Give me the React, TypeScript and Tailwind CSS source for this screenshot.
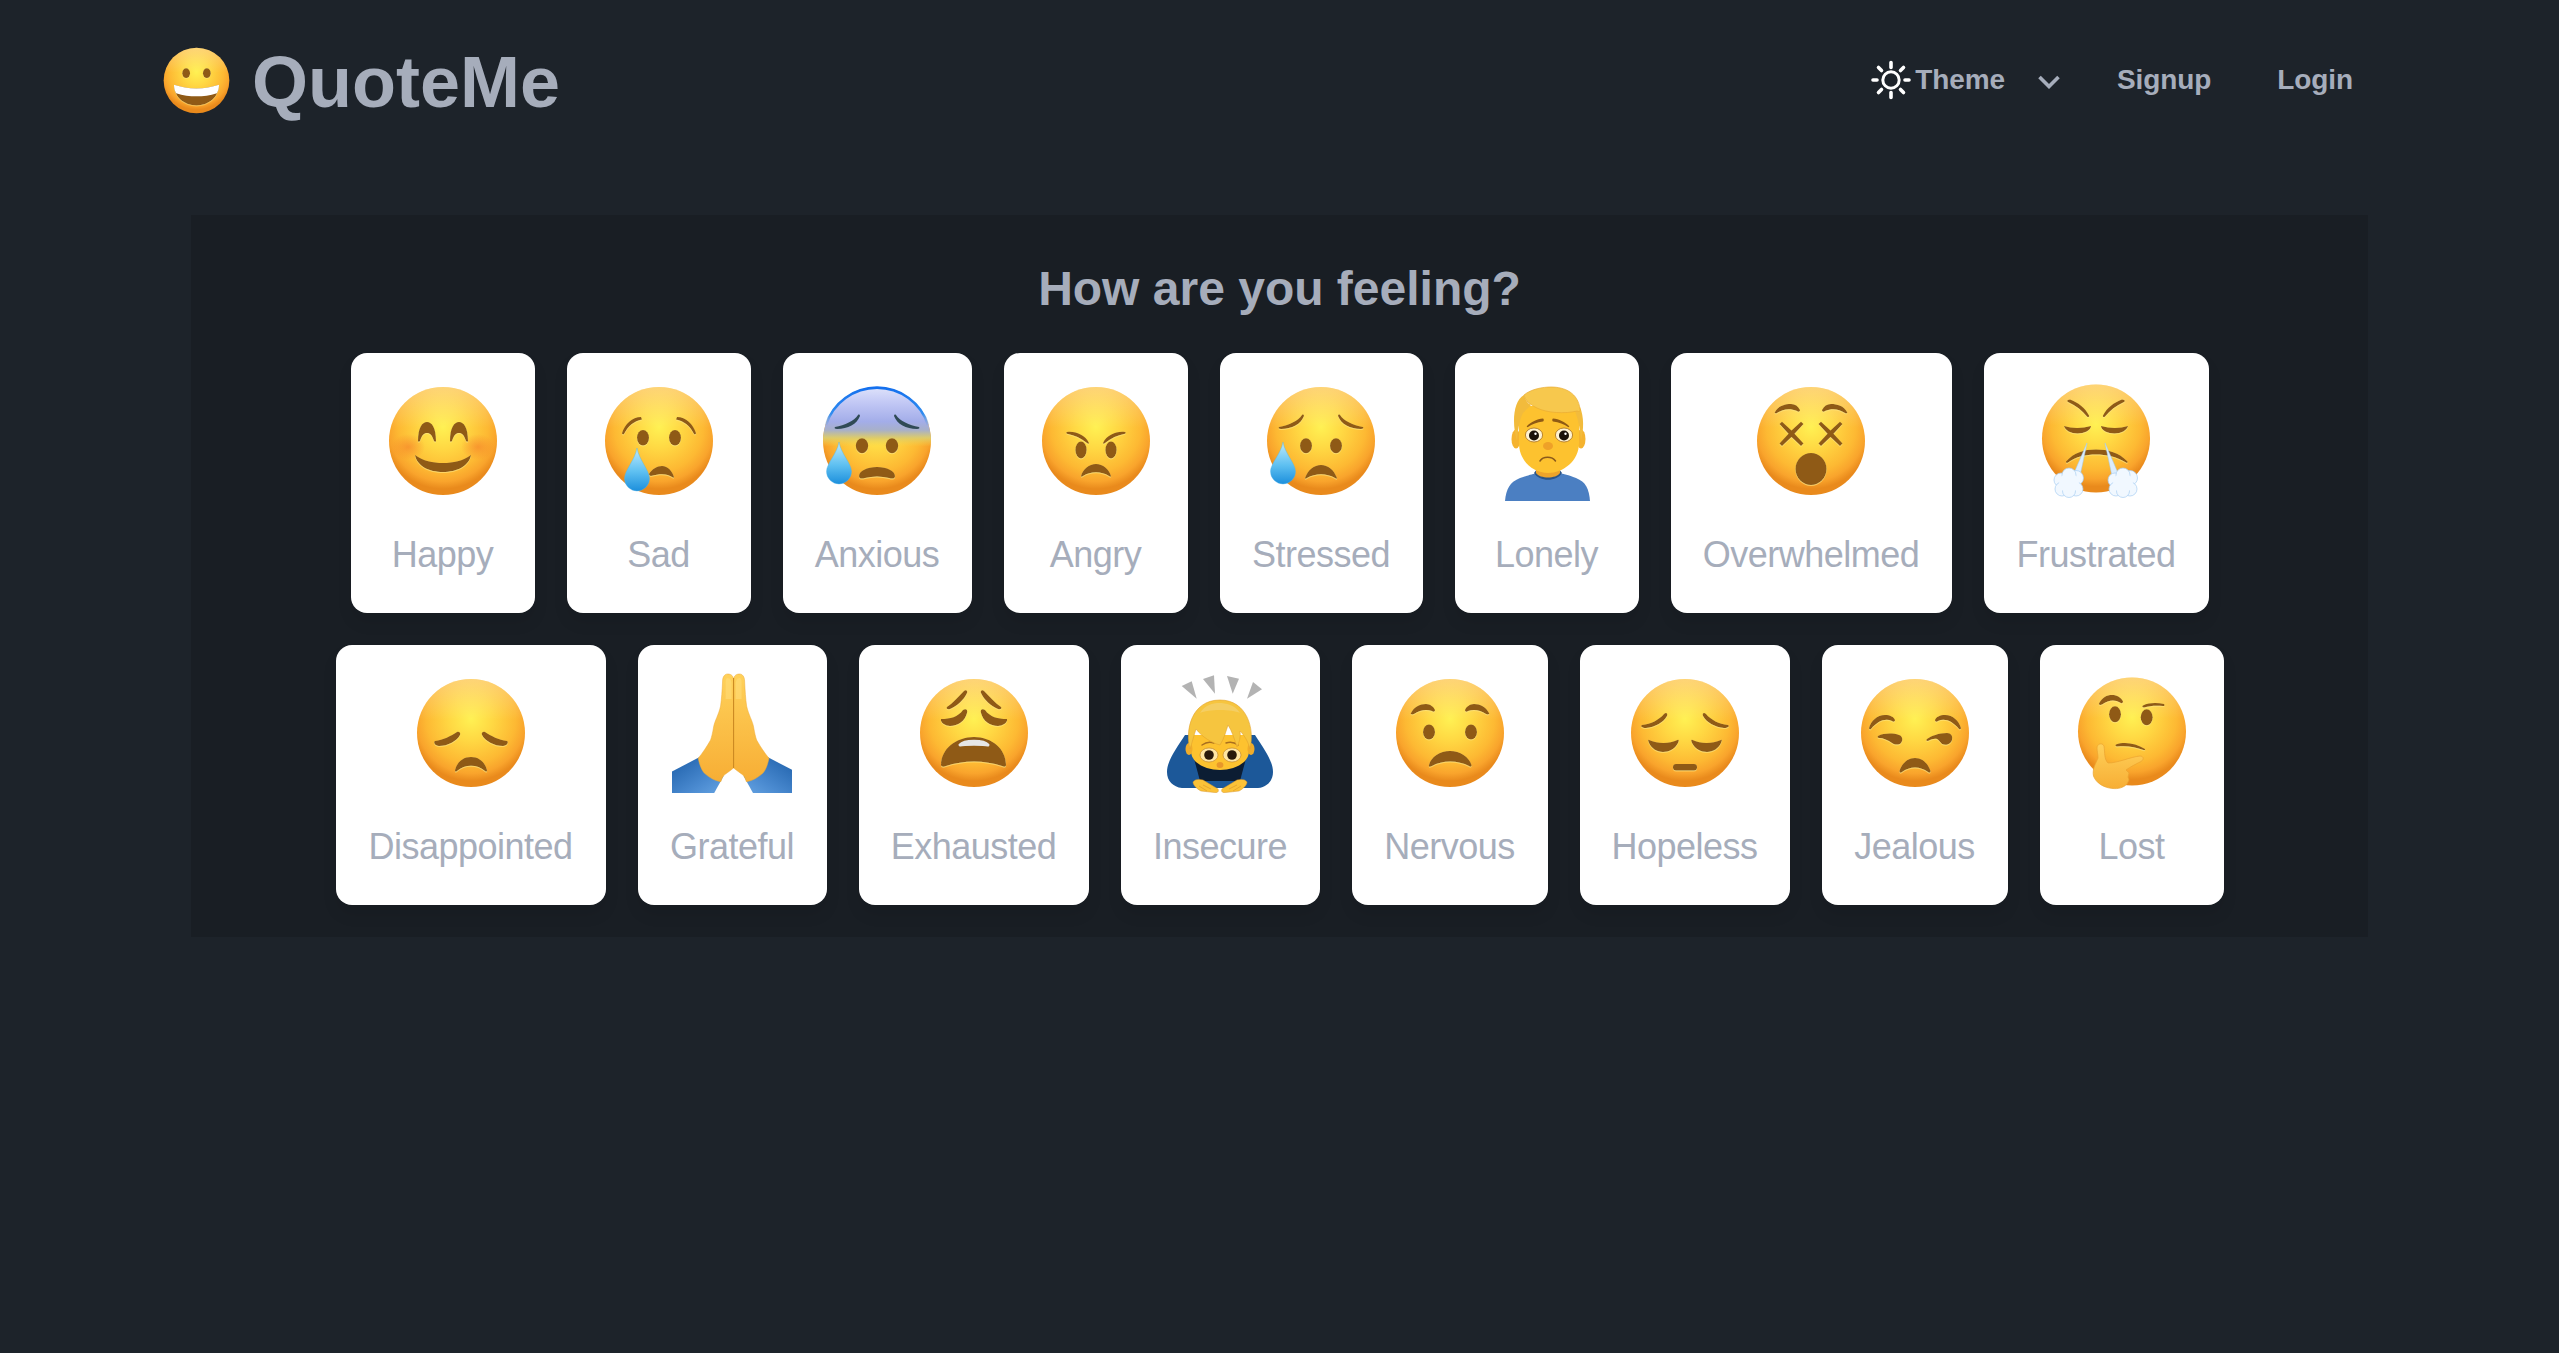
import React from 'react';

const FEAT = '#8f5a14';

const Defs = () => (
  <svg className="block h-0 w-0" aria-hidden="true">
    <defs>
      <radialGradient id="skin" gradientUnits="userSpaceOnUse" cx="60" cy="46" r="62">
        <stop offset="0" stopColor="#fff153" />
        <stop offset="0.35" stopColor="#ffd843" />
        <stop offset="0.72" stopColor="#fdb933" />
        <stop offset="0.88" stopColor="#f9a42c" />
        <stop offset="1" stopColor="#e98a1c" />
      </radialGradient>
      <linearGradient id="shine" x1="0" y1="0" x2="0" y2="1">
        <stop offset="0" stopColor="#ffffff" stopOpacity="0.32" />
        <stop offset="0.38" stopColor="#ffffff" stopOpacity="0" />
      </linearGradient>
      <linearGradient id="cold" x1="0" y1="0" x2="0" y2="1">
        <stop offset="0" stopColor="#dfe3fb" />
        <stop offset="0.14" stopColor="#c3c9f5" />
        <stop offset="0.32" stopColor="#a3ade9" />
        <stop offset="0.4" stopColor="#a8b0c8" />
        <stop offset="0.47" stopColor="#dccb6c" />
        <stop offset="0.55" stopColor="#f3d34e" stopOpacity="0" />
      </linearGradient>
      <linearGradient id="rim" x1="0" y1="0" x2="0" y2="1">
        <stop offset="0" stopColor="#1470ee" />
        <stop offset="0.7" stopColor="#2f8cf0" />
        <stop offset="1" stopColor="#6f9fd8" stopOpacity="0.2" />
      </linearGradient>
      <radialGradient id="blush">
        <stop offset="0" stopColor="#f5822a" stopOpacity="0.65" />
        <stop offset="1" stopColor="#f5822a" stopOpacity="0" />
      </radialGradient>
      <linearGradient id="tear" x1="0" y1="0" x2="0" y2="1">
        <stop offset="0" stopColor="#bfeafc" />
        <stop offset="0.55" stopColor="#5ec0f1" />
        <stop offset="1" stopColor="#1d8fdc" />
      </linearGradient>
      <linearGradient id="hand" x1="0" y1="0" x2="0" y2="1">
        <stop offset="0" stopColor="#ffd15a" />
        <stop offset="1" stopColor="#f7ae35" />
      </linearGradient>
      <linearGradient id="sleeve" x1="0" y1="0" x2="1" y2="1">
        <stop offset="0" stopColor="#1c5ea8" />
        <stop offset="0.65" stopColor="#4a8ad0" />
        <stop offset="1" stopColor="#65a3e2" />
      </linearGradient>
      <filter id="bevel" x="-20%" y="-20%" width="140%" height="140%">
        <feDropShadow dx="0" dy="0.7" stdDeviation="0.25" floodColor="#ffe680" floodOpacity="0.9" />
      </filter>
    </defs>
  </svg>
);

const Both = ({ children }: { children: React.ReactNode }) => (
  <>
    {children}
    <g transform="matrix(-1 0 0 1 120 0)">{children}</g>
  </>
);

const Emoji = ({ children, className = 'w-[120px] h-[120px]' }: { children: React.ReactNode; className?: string }) => (
  <svg viewBox="0 0 120 120" className={`block shrink-0 ${className}`}>
    {children}
  </svg>
);

const Face = ({ children }: { children?: React.ReactNode }) => (
  <>
    <circle cx="60" cy="60" r="54" fill="url(#skin)" />
    <circle cx="60" cy="60" r="54" fill="url(#shine)" />
    <g fill={FEAT} filter="url(#bevel)">
      {children}
    </g>
  </>
);

const Tear = ({ x, top, bottom }: { x: number; top: number; bottom: number }) => {
  const w = 12.5;
  const c = bottom - w;
  return (
    <path
      d={`M${x} ${top}C${x + 2} ${top + 12} ${x + w} ${c - 8} ${x + w} ${c}A${w} ${w} 0 0 1 ${x - w} ${c}C${x - w} ${c - 8} ${x - 2} ${top + 12} ${x} ${top}Z`}
      fill="url(#tear)"
      stroke="#4fb2ea"
      strokeWidth="0.4"
    />
  );
};

const Happy = () => (
  <Emoji>
    <Face />
    <ellipse cx="25" cy="66" rx="17" ry="13" fill="url(#blush)" />
    <ellipse cx="95" cy="66" rx="17" ry="13" fill="url(#blush)" />
    <g fill={FEAT} filter="url(#bevel)">
      <Both>
        <path d="M35 60C35 47 39 41 44 41C49 41 53 47 53 60C53 61 51.5 61 51 60C49 54 47 52 44 52C41 52 39 54 37 60C36.5 61 35 61 35 60Z" />
      </Both>
      <path d="M32 74C40 80 50 82 60 82C70 82 80 80 88 74C86 85 74 91 60 91C46 91 34 85 32 74Z" />
    </g>
  </Emoji>
);

const Sad = () => (
  <Emoji>
    <Face>
      <Both>
        <path d="M23 52C26 43 33 36 42 36L43 38.5C35 40 29 45 25 53C24 54 23 53 23 52Z" />
        <ellipse cx="44" cy="56.7" rx="6" ry="7.8" />
      </Both>
      <path d="M50 93C53 88 58 85 63 85C69 85 73 90 75 96C75 97 74 97 73 96C69 93 62 92 52 95C51 95 50 94 50 93Z" />
    </Face>
    <Tear x={38} top={67} bottom={110} />
  </Emoji>
);

const Anxious = () => (
  <Emoji>
    <Face />
    <circle cx="60" cy="60" r="54" fill="url(#cold)" />
    <path d="M9 44A53.5 53.5 0 0 1 111 44" fill="none" stroke="url(#rim)" strokeWidth="2.6" />
    <g fill="#2f4a55">
      <Both>
        <path d="M18 46C28 44 37 40 41 34C42 33 43 34 43 35C40 43 31 48 20 48C18 48 17 47 18 46Z" />
      </Both>
    </g>
    <g fill={FEAT} filter="url(#bevel)">
      <Both>
        <ellipse cx="45" cy="64.7" rx="6.2" ry="7.5" />
      </Both>
      <path d="M42 95C42 90 50 86 60 86C70 86 78 90 78 95C78 98 75 98 72 97C64 95 56 95 48 97C45 98 42 98 42 95Z" />
    </g>
    <Tear x={22} top={61} bottom={103} />
  </Emoji>
);

const Angry = () => (
  <Emoji>
    <Face>
      <Both>
        <path d="M31 51C40 50 49 54 53 62C53 63 52 63 51 62C45 57 38 54 32 53C30 53 30 51 31 51Z" />
        <ellipse cx="45" cy="69" rx="5.6" ry="8.4" />
      </Both>
      <path d="M45 95C47 88 53 83 60 83C67 83 73 88 75 95C75 96 74 96 73 95C65 90 55 90 47 95C46 96 45 96 45 95Z" />
    </Face>
  </Emoji>
);

const Stressed = () => (
  <Emoji>
    <Face>
      <Both>
        <path d="M18 46C28 44 37 40 41 34C42 33 43 34 43 35C40 43 31 48 20 48C18 48 17 47 18 46Z" />
        <ellipse cx="45" cy="64.7" rx="6" ry="7.5" />
      </Both>
      <path d="M44 97C47 89 53 84 60 84C67 84 73 89 76 97C76 98 75 98 74 97C65 92 55 92 46 97C45 98 44 98 44 97Z" />
    </Face>
    <Tear x={22} top={61} bottom={103} />
  </Emoji>
);

const Lonely = () => (
  <Emoji>
    <path d="M18 120C19 108 23 101 33 97C42 94 46 93 50 92L72 92C77 93 81 94 89 97C99 101 102 108 103 120Z" fill="#4b7fc2" />
    <path d="M47 92C52 101 70 101 75 92L72 88L50 88Z" fill="#2b5486" />
    <path d="M49 84L73 84L73 92C69 98 53 98 49 92Z" fill="#eda42a" />
    <ellipse cx="29" cy="58" rx="4.5" ry="9.5" fill="#f5b32f" />
    <ellipse cx="94" cy="58" rx="4.5" ry="9.5" fill="#f5b32f" />
    <path d="M32 25L92 25L92 62C92 80 76 92 61 92C46 92 32 80 32 62Z" fill="#fdc22f" />
    <path d="M37 14C30 18 27 28 27 40C27 47 28 53 30 60C31 50 32 40 36 32C40 28 42 26 44 24C40 22 38 18 37 14Z" fill="#f2bb3c" />
    <path d="M93 26C97 36 97 48 94 60C93 50 92 40 88 30Z" fill="#f2bb3c" />
    <path d="M37 14C44 8 56 6 64 6C78 6 91 12 93 28C94 30 92 31 90 30C78 33 60 32 50 27C44 24 38 20 37 14Z" fill="#f7c84d" stroke="#e9ac34" strokeWidth="0.7" />
    <g fill={FEAT}>
      <path d="M40 45C44 41 50 38 56 37.5C57 38 57 40 56 40.5C50 41.5 45 43 41 46C40 46.5 39.5 45.5 40 45Z" />
      <path d="M82 45C78 41 72 38 66 37.5C65 38 65 40 66 40.5C72 41.5 77 43 81 46C82 46.5 82.5 45.5 82 45Z" />
    </g>
    <path d="M53 80C56 75 65 75 68.5 80" fill="none" stroke="#8a5a1b" strokeWidth="1.5" strokeLinecap="round" />
    <ellipse cx="61" cy="65" rx="5" ry="4" fill="#eea128" />
    <ellipse cx="47" cy="54" rx="8.6" ry="7" fill="#fff3d2" stroke="#a8701f" strokeWidth="0.8" />
    <ellipse cx="77" cy="54" rx="8.6" ry="7" fill="#fff3d2" stroke="#a8701f" strokeWidth="0.8" />
    <circle cx="47" cy="54.5" r="5" fill="#1b1208" />
    <circle cx="77" cy="54.5" r="5" fill="#1b1208" />
    <circle cx="48.5" cy="52.8" r="1.2" fill="#fff" />
    <circle cx="78.5" cy="52.8" r="1.2" fill="#fff" />
  </Emoji>
);

const Overwhelmed = () => (
  <Emoji>
    <Face>
      <Both>
        <path d="M24 31C27 25 34 23 40 23C44 23 47 25 49 29C49 31 47 31 46 30C39 27 32 28 26 32C25 33 23 32 24 31Z" />
        <path d="M28.5 43L31 40.7L40.5 49.5L50 40.7L52.5 43L43.5 52.7L52.5 62.5L50 65L40.5 56L31 65L28.5 62.5L37.5 52.7Z" />
      </Both>
      <ellipse cx="60" cy="88" rx="15.5" ry="16" />
    </Face>
  </Emoji>
);

const Cloud = ({ x, y }: { x: number; y: number }) => (
  <g fill="#f1f8ff" stroke="#a9cff2" strokeWidth="0.7">
    <circle cx={x - 8} cy={y - 3} r="7" />
    <circle cx={x + 7} cy={y - 5} r="7.5" />
    <circle cx={x - 7} cy={y + 6} r="7" />
    <circle cx={x + 7} cy={y + 6} r="7" />
    <circle cx={x} cy={y - 8} r="7" />
    <circle cx={x} cy={y + 8} r="6.5" />
    <circle cx={x} cy={y} r="10" stroke="none" />
  </g>
);

const Frustrated = () => (
  <Emoji>
    <g transform="translate(0 -2.5)">
      <Face>
        <Both>
          <path d="M32 21.5L34 21C42 24 49 29 53 37C53.5 38.5 52 39 51 38C46 32 40 27 32 23.5C31 23 31 22 32 21.5Z" />
          <path d="M28 47.5C36 50 46 50 55 47.5C55 52 48 55 41.5 55C35 55 29 52 28 47.5Z" />
        </Both>
        <path d="M30 83C38 74 48 71 60 71C72 71 83 74 91.5 83C92 84 91 85 90 84C80 78 70 76 60 76C50 76 40 78 32 84C31 85 29.5 84 30 83Z" />
      </Face>
    </g>
    <Both>
      <path d="M51 62L38 92L44 95Z" fill="#dcedfd" stroke="#9ecbf3" strokeWidth="0.5" />
    </Both>
    <Cloud x={33} y={102} />
    <Cloud x={87} y={102} />
  </Emoji>
);

const Disappointed = () => (
  <Emoji>
    <Face>
      <Both>
        <path d="M24 68C32 67 40 63 46 59C48 58 50 60 49 62C46 68 37 73 28 73C24 73 22 69 24 68Z" />
      </Both>
      <path d="M44 97C46 89 52 84 60 84C68 84 74 89 76 97C76 99 75 99 74 98C66 91 54 91 46 98C45 99 44 99 44 97Z" />
    </Face>
  </Emoji>
);

const Grateful = () => (
  <Emoji>
    <g transform="translate(1.6 0)">
      <Both>
        <path d="M-2 98.7L25.6 84.3L50 103L40.6 120L-2 120Z" fill="url(#sleeve)" />
        <path
          d="M60 95L60 8C60 3 58 1 54 1C51 1 49 4 49 8C48.5 18 48 26 47 33C45 42 41 48 40 54C39 60 38 64 37 67C33 74 29 80 24.6 85.3C26 92 28 97 30.6 100C36 105 42 108 47.3 108.7C48 106 49 104 50.6 102C54 100 57 97 60 95Z"
          fill="url(#hand)"
          stroke="#eeaa34"
          strokeWidth="0.5"
        />
        <path d="M54 5C57 5 58 8 58 12L58 26L52 26L52 12C52 8 52 5 54 5Z" fill="#ffdf7d" opacity="0.5" />
      </Both>
      <path d="M60 5L60 95" stroke="#c9861f" strokeWidth="1" />
    </g>
  </Emoji>
);

const Exhausted = () => (
  <Emoji>
    <Face>
      <Both>
        <path d="M33 34C39 30 44 24 50 18C52 16 54 18 53 20C50 27 43 33 36 36C33 37 32 35 33 34Z" />
        <path d="M27 46C36 46 44 44 49 37C52 35 54 37 53 40C51 48 44 53 36 53C32 53 26 50 27 46Z" />
      </Both>
      <path d="M27 92C27 76 42 64 60 64C78 64 92 76 92 92C92 94 90 94 88 93C70 87 50 87 32 93C30 94 27 94 27 92Z" />
    </Face>
    <path d="M46 72C50 67 70 67 74 72C70 71 50 71 46 72Z" fill="#e6e6e6" stroke="#e6e6e6" strokeWidth="3" strokeLinejoin="round" />
  </Emoji>
);

const Insecure = () => (
  <Emoji>
    <g fill="#b3b3b3">
      <path d="M21.7 13L31.7 8.3L36.7 25.7Z" />
      <path d="M43 6L54 2.3L55 20.7Z" />
      <path d="M67 3L79 5.7L72.7 20.7Z" />
      <path d="M93 9L102 16.3L87 25.7Z" />
    </g>
    <path d="M25 62C16 76 7 88 7 99C7 108 13 114 22 115L98 115C107 114 113 108 113 99C113 88 104 76 95 62Z" fill="#1c5899" />
    <path d="M32 78L88 78L80 108L40 108Z" fill="#0c1d33" />
    <path d="M31 62L89 62L89 78C89 90 74 97 60 97C46 97 31 90 31 78Z" fill="#fdc22f" />
    <ellipse cx="29" cy="76" rx="3.5" ry="6" fill="#f0ac2a" />
    <ellipse cx="91" cy="76" rx="3.5" ry="6" fill="#f0ac2a" />
    <path d="M42 72C46 69 50 68.5 54 70M66 70C70 68.5 74 69 78 72" fill="none" stroke="#a86f1f" strokeWidth="1.4" strokeLinecap="round" />
    <path d="M30 76C25 58 31 27 60 27C87 27 95 56 90 76C88 68 84 62 80 58C81 64 79 70 77 74C74 65 72 58 68 52C66 58 64 66 60 72C52 70 42 64 36 56C34 62 32 70 30 76Z" fill="#f6c53f" stroke="#e3a22c" strokeWidth="0.6" />
    <path d="M40 40C45 32 53 30 59 30C66 30 75 32 80 40C72 36 48 36 40 40Z" fill="#f3dc9a" opacity="0.4" />
    <ellipse cx="49" cy="82" rx="9" ry="7" fill="#ffe6a3" stroke="#b8802a" strokeWidth="0.6" />
    <ellipse cx="72" cy="82" rx="9" ry="7" fill="#ffe6a3" stroke="#b8802a" strokeWidth="0.6" />
    <circle cx="49" cy="82" r="4.8" fill="#2a1a0a" />
    <circle cx="72" cy="82" r="4.8" fill="#2a1a0a" />
    <ellipse cx="60" cy="92" rx="3.4" ry="3" fill="#e8972a" />
    <Both>
      <path d="M33 109C35 106 39 106 43 107L58 116C59 118 58 120 55 119.6L41 118C37 116 33 112 33 109Z" fill="#fcc237" stroke="#d9962a" strokeWidth="0.5" />
      <path d="M43 112L51 116M39 113L47 118" fill="none" stroke="#d9962a" strokeWidth="0.6" />
    </Both>
  </Emoji>
);

const Nervous = () => (
  <Emoji>
    <Face>
      <Both>
        <path d="M21 40C24 34 30 31 36 31C40 31 44 34 45 37C45 39 43 39 42 38C36 36 30 37 24 41C22 42 20 41 21 40Z" />
        <ellipse cx="39" cy="59" rx="6" ry="7.6" />
      </Both>
      <path d="M39 92C41 84 50 78 60 78C70 78 79 84 81.5 92C82 94 80 94 79 93C68 87 52 87 42 93C40 94 38.5 94 39 92Z" />
    </Face>
  </Emoji>
);

const Hopeless = () => (
  <Emoji>
    <Face>
      <Both>
        <path d="M17 52C26 51 34 47 39 41C41 39 43 40 42 43C38 50 30 54 21 55C17 55 15 53 17 52Z" />
        <path d="M24 67C33 71 44 71 52.5 67C54 66 54 68 53 70C50 76 44 79 38 79C32 79 26 75 24 70C23 68 23 66 24 67Z" />
      </Both>
      <rect x="48" y="91" width="24" height="6.5" rx="3" />
    </Face>
  </Emoji>
);

const Jealous = () => (
  <Emoji>
    <Face>
      <path d="M14 55C16 48 22 42 30 42C35 42 39 44 40 47C40 49 38 49 37 48C30 45 23 48 16 56C15 57 14 56 14 55Z" />
      <path d="M106 55C104 48 98 42 90 42C85 42 81 44 80 47C80 49 82 49 83 48C90 45 97 48 104 56C105 57 106 56 106 55Z" />
      <path d="M23 63C29 60 38 60 44 62C48 63 48 68 46 70C44 72 40 72 37 70C33 67 28 65 24 65C23 65 22 64 23 63Z" />
      <path d="M72 66C76 63 84 60 92 60C96 60 98 63 97 67C96 71 91 73 87 71C85 69 84 67 82 66C79 65 75 67 73 68C71 68 71 67 72 66Z" />
      <path d="M44.5 98C47 90 53 85 60 85C67 85 73 90 75.5 98C75.5 100 74 100 73 99C65 93 55 93 47 99C46 100 44.5 100 44.5 98Z" />
    </Face>
  </Emoji>
);

const Lost = () => (
  <Emoji>
    <g transform="translate(0 -1.5)">
      <Face>
        <path d="M27 32C30 26 35 23.5 40 23.5C45 23.5 49 26 51 30C51 32 49 32 48 31C43 28 37 28 30 33C28 34 26.5 33 27 32Z" />
        <path d="M71 34C77 31 85 31 92 32.5C93 33.5 92.5 35 91 34.5C85 34 78 34 72 36C70 36 70 34.5 71 34Z" />
        <ellipse cx="43" cy="42.8" rx="6" ry="8" />
        <ellipse cx="74.7" cy="45.8" rx="6" ry="8" />
        <path d="M44 73C53 70 64 72 73 77.5C73.5 78.5 72.5 79 71.5 78.5C63 75 54 74 45 75C43.5 75 43 73.5 44 73Z" />
      </Face>
    </g>
    <path d="M25 75C25 71 30 69 32 73C33 80 32 86 36 90C46 90 58 84 68 83C72 83 72 87 69 88.5C64 91 58 94 54 97L57 100L56 104L57 107L55 111C51 115 46 116 41 115.5C32 115 24 110 21.5 103C20 96 24 90 26 85C26 81 25 78 25 75Z" fill="url(#hand)" stroke="#eba32f" strokeWidth="0.7" />
  </Emoji>
);

const Grin = () => (
  <Emoji className="w-[73px] h-[73px]">
    <Face>
      <Both>
        <ellipse cx="43" cy="48" rx="6.4" ry="8" />
      </Both>
      <path d="M23 67C35 71 47 73 60 73C73 73 85 71 97 67C97 87 80 101 60 101C40 101 23 87 23 67Z" />
    </Face>
    <path d="M23 67C35 71 47 73 60 73C73 73 85 71 97 67C97 72 96 77 93.5 81C82 85 71 86 60 86C49 86 38 85 26.5 81C24 77 23 72 23 67Z" fill="#fff" />
  </Emoji>
);

const FEELINGS = [
  { label: 'Happy', width: 'w-[184px]', icon: <Happy /> },
  { label: 'Sad', width: 'w-[184px]', icon: <Sad /> },
  { label: 'Anxious', width: 'w-[189px]', icon: <Anxious /> },
  { label: 'Angry', width: 'w-[184px]', icon: <Angry /> },
  { label: 'Stressed', width: 'w-[203px]', icon: <Stressed /> },
  { label: 'Lonely', width: 'w-[184px]', icon: <Lonely /> },
  { label: 'Overwhelmed', width: 'w-[281px]', icon: <Overwhelmed /> },
  { label: 'Frustrated', width: 'w-[225px]', icon: <Frustrated /> },
  { label: 'Disappointed', width: 'w-[270px]', icon: <Disappointed /> },
  { label: 'Grateful', width: 'w-[189px]', icon: <Grateful /> },
  { label: 'Exhausted', width: 'w-[230px]', icon: <Exhausted /> },
  { label: 'Insecure', width: 'w-[199px]', icon: <Insecure /> },
  { label: 'Nervous', width: 'w-[196px]', icon: <Nervous /> },
  { label: 'Hopeless', width: 'w-[210px]', icon: <Hopeless /> },
  { label: 'Jealous', width: 'w-[186px]', icon: <Jealous /> },
  { label: 'Lost', width: 'w-[184px]', icon: <Lost /> },
];

const SunIcon = () => (
  <svg viewBox="0 0 40 40" className="h-10 w-10 shrink-0" fill="none" stroke="#fff" strokeWidth="3.6" strokeLinecap="round">
    <circle cx="20" cy="20" r="8.2" strokeWidth="3" />
    <path d="M20 2.5v5M20 32.5v5M2 20h4M34 20h4M7.5 7.5l3 3M29.5 29.5l3 3M7.5 32.5l3-3M29.5 10.5l3-3" />
  </svg>
);

export default function App() {
  return (
    <div className="min-h-screen bg-[#1d232a] font-['Liberation_Sans',Arial,sans-serif] text-[#a6adbb]">
      <Defs />
      <header className="flex h-[160px] items-center justify-between pl-[160px] pr-[206px]">
        <div className="flex items-center gap-[19px]">
          <Grin />
          <span className="pt-[3px] text-[72px] font-bold leading-none">QuoteMe</span>
        </div>
        <nav className="flex items-center text-[28px] font-bold leading-10 tracking-[-0.1px]">
          <SunIcon />
          <span className="ml-1">Theme</span>
          <svg viewBox="0 0 22 14" className="ml-[33px] mt-1 h-[14px] w-[22px]" fill="none" stroke="#a6adbb" strokeWidth="3.6">
            <path d="M1.5 2l9.5 9.5L20.5 2" />
          </svg>
          <span className="ml-[57px]">Signup</span>
          <span className="ml-[66px]">Login</span>
        </nav>
      </header>

      <main className="mx-[191px] mt-[55px] bg-[#191e24] pb-8 pt-[42px]">
        <h1 className="mb-8 text-center text-[48px] font-bold leading-[64px]">How are you feeling?</h1>
        <div className="mx-auto flex w-[1890px] flex-wrap justify-center gap-8">
          {FEELINGS.map((f) => (
            <div key={f.label} className={`flex h-[260px] flex-col items-center rounded-2xl bg-white pt-7 shadow-[0_10px_15px_rgba(0,0,0,0.08)] ${f.width}`}>
              {f.icon}
              <span className="mt-[26px] text-[36px] leading-[56px] tracking-[-0.5px] text-[#a6adbb]">{f.label}</span>
            </div>
          ))}
        </div>
      </main>
    </div>
  );
}
